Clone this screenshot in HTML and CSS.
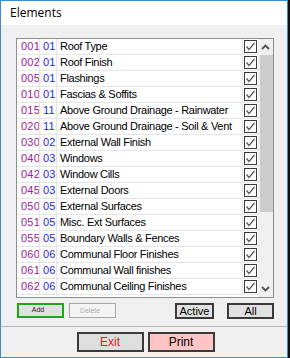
FILE: index.html
```html
<!DOCTYPE html>
<html lang="en">
<head>
    <meta charset="UTF-8">
    <title>Elements</title>
    <link rel="stylesheet" href="styles.css">
</head>
<body>
    <div class="window">
        <div class="titlebar">Elements</div>
        <div class="client">
            <div class="listbox">
                <div class="rows" id="rows"></div>
                <div class="scrollbar">
                    <div class="arrow">
                        <svg width="9" height="6" viewBox="0 0 9 6"><polyline points="1,5 4.5,1.5 8,5" fill="none" stroke="#505050" stroke-width="1.8"/></svg>
                    </div>
                    <div class="track"><div class="thumb"></div></div>
                    <div class="arrow">
                        <svg width="9" height="6" viewBox="0 0 9 6"><polyline points="1,1 4.5,4.5 8,1" fill="none" stroke="#505050" stroke-width="1.8"/></svg>
                    </div>
                </div>
            </div>

            <div class="btnrow">
                <div class="left">
                    <button class="small add">Add</button>
                    <button class="small delete">Delete</button>
                </div>
                <div class="right">
                    <button class="tool active">Active</button>
                    <button class="tool all">All</button>
                </div>
            </div>

            <div class="footer">
                <button class="big exit">Exit</button>
                <button class="big print">Print</button>
            </div>
        </div>
    </div>

    <script src="app.js"></script>
</body>
</html>
```

FILE: app.js
```js
const elements = [
    ["001", "01", "Roof Type"],
    ["002", "01", "Roof Finish"],
    ["005", "01", "Flashings"],
    ["010", "01", "Fascias & Soffits"],
    ["015", "11", "Above Ground Drainage - Rainwater"],
    ["020", "11", "Above Ground Drainage - Soil & Vent"],
    ["030", "02", "External Wall Finish"],
    ["040", "03", "Windows"],
    ["042", "03", "Window Cills"],
    ["045", "03", "External Doors"],
    ["050", "05", "External Surfaces"],
    ["051", "05", "Misc. Ext Surfaces"],
    ["055", "05", "Boundary Walls & Fences"],
    ["060", "06", "Communal Floor Finishes"],
    ["061", "06", "Communal Wall finishes"],
    ["062", "06", "Communal Ceiling Finishes"]
];

const tick = '<svg width="13" height="13" viewBox="0 0 13 13">' +
    '<rect x="0.5" y="0.5" width="12" height="12" fill="#fff" stroke="#3a3a3a"/>' +
    '<polyline points="2.5,6.5 5,9.5 10.5,3" fill="none" stroke="#555" stroke-width="1.2"/></svg>';

const rows = document.getElementById("rows");
elements.forEach(function (el) {
    const row = document.createElement("div");
    row.className = "row";
    row.innerHTML =
        '<span class="code">' + el[0] + '</span>' +
        '<span class="num">' + el[1] + '</span>' +
        '<span class="name"></span>' +
        '<span class="check">' + tick + '</span>';
    row.querySelector(".name").textContent = el[2];
    rows.appendChild(row);
});
```

FILE: styles.css
```css
body {
    margin: 0;
    background: #121212;
    font-family: 'Liberation Sans', Arial, sans-serif;
}

.window {
    box-sizing: border-box;
    width: 288px;
    height: 358px;
    border: 1px solid #3d8ad6;
    background: #f0f0f0;
    display: flex;
    flex-direction: column;
}

.titlebar {
    height: 24px;
    line-height: 24px;
    padding-left: 9px;
    background: #ffffff;
    font-family: 'Open Sans', 'Liberation Sans', sans-serif;
    font-size: 12px;
    color: #000;
}

.client {
    flex: 1;
    display: flex;
    flex-direction: column;
    padding-top: 13px;
}

.listbox {
    box-sizing: border-box;
    width: 258px;
    height: 260px;
    margin-left: 15px;
    border: 1px solid #8f8f8f;
    background: #ffffff;
    display: flex;
}

.rows {
    width: 241px;
}

.row {
    box-sizing: border-box;
    height: 16px;
    display: flex;
    border-bottom: 1px solid #e6e6e6;
    font-size: 11px;
    line-height: 15px;
    letter-spacing: -0.3px;
}

.row span {
    box-sizing: border-box;
    border-right: 1px solid #e6e6e6;
    white-space: nowrap;
    overflow: hidden;
}

.code {
    width: 23px;
    padding-left: 4px;
    color: #a0209c;
    letter-spacing: 0.2px;
}

.num {
    width: 17px;
    padding-left: 3px;
    color: #1f1fe6;
    letter-spacing: 0.2px;
}

.name {
    width: 186px;
    padding-left: 3px;
    color: #000;
}

.row .check {
    width: 15px;
    border-right: none;
    display: flex;
    align-items: center;
    padding-left: 1px;
}

.check svg {
    display: block;
}

.scrollbar {
    width: 15px;
    display: flex;
    flex-direction: column;
    background: #f0f0f0;
}

.arrow {
    height: 16px;
    display: flex;
    align-items: center;
    justify-content: center;
}

.track {
    flex: 1;
}

.thumb {
    height: 157px;
    margin-left: 2px;
    background: #cdcdcd;
}

.btnrow {
    display: flex;
    justify-content: space-between;
    margin: 5px 13px 0 16px;
    height: 16px;
}

.left,
.right {
    display: flex;
}

button {
    box-sizing: border-box;
    margin: 0;
    padding: 0;
    font-family: 'Liberation Sans', Arial, sans-serif;
    cursor: pointer;
}

.small {
    width: 47px;
    height: 15px;
    font-size: 7px;
    line-height: 9px;
    display: flex;
    justify-content: center;
    align-items: flex-start;
    padding-right: 5px;
}

.add {
    border: 2px solid #19a819;
    background: #e1e1e1;
    color: #222;
}

.delete {
    margin-left: 5px;
    border: 1px solid #a8a8a8;
    background: #f4f4f4;
    color: #b0b0b0;
    padding-top: 2px;
}

.tool {
    height: 16px;
    border: 2px solid #3a3a3a;
    background: #e1e1e1;
    font-size: 11px;
    line-height: 12px;
    color: #000;
}

.active {
    width: 39px;
}

.all {
    width: 47px;
    margin-left: 13px;
}

.footer {
    margin-top: 7px;
    border-top: 1px solid #b9b9b9;
    display: flex;
    justify-content: center;
    padding-top: 5px;
    padding-left: 3px;
}

.big {
    width: 67px;
    height: 20px;
    border: 2px solid #3a3a3a;
    font-size: 12px;
}

.exit {
    background: #dedede;
    color: #e81818;
}

.print {
    margin-left: 4px;
    background: #ffc4c4;
    color: #000;
}
```
